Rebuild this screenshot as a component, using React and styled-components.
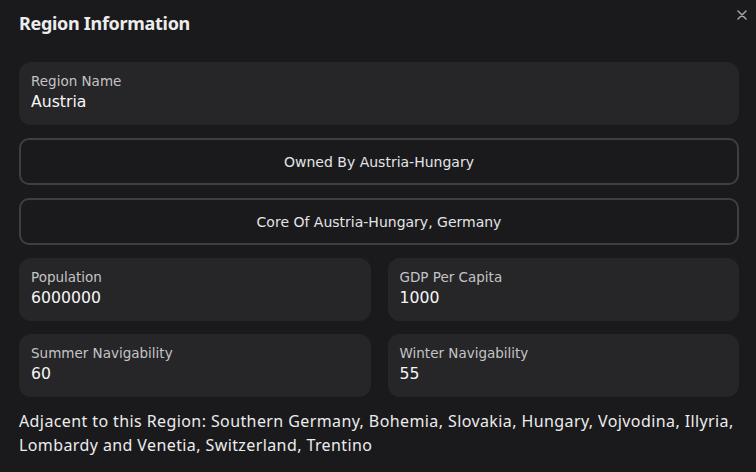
import React from "react"
import styled, { createGlobalStyle } from "styled-components"

const GlobalStyle = createGlobalStyle`
    html, body {
        margin: 0;
        padding: 0;
        background: #1a1a1c;
    }
    body {
        font-family: "DejaVu Sans", "Noto Sans", sans-serif;
        color: #f2f2f2;
    }
`

const Modal = styled.div`
    position: relative;
    width: 756px;
    height: 472px;
    box-sizing: border-box;
    padding: 10px 17px 0 19px;
    background: #1a1a1c;
    display: flex;
    flex-direction: column;
`

const Title = styled.h2`
    margin: 0;
    font-family: "Noto Sans", sans-serif;
    font-size: 18px;
    font-weight: 700;
    letter-spacing: -0.3px;
    line-height: 26px;
    color: #ececec;
`

const CloseButton = styled.button`
    position: absolute;
    top: 7px;
    right: 6px;
    width: 16px;
    height: 16px;
    padding: 0;
    border: none;
    background: none;
    display: flex;
    align-items: center;
    justify-content: center;
    cursor: pointer;
`

const Body = styled.div`
    margin-top: 26px;
    display: flex;
    flex-direction: column;
    gap: 13px;
`

const Field = styled.div`
    background: #262628;
    border-radius: 12px;
    height: 63px;
    box-sizing: border-box;
    padding: 10px 12px 0;
    display: flex;
    flex-direction: column;
`

const Label = styled.span`
    font-size: 13.5px;
    line-height: 18px;
    color: #c4c4c6;
`

const Value = styled.span`
    font-size: 15.7px;
    font-weight: 500;
    line-height: 24px;
    color: #f5f5f5;
`

const OutlineButton = styled.button`
    height: 47px;
    border: 2px solid #3e3e43;
    border-radius: 10px;
    background: transparent;
    color: #e4e4e6;
    font-family: inherit;
    font-size: 14px;
    cursor: pointer;
`

const Grid = styled.div`
    display: grid;
    grid-template-columns: 1fr 1fr;
    column-gap: 17px;
    row-gap: 13px;
`

const Adjacent = styled.p`
    margin: 12px 0 0;
    font-family: "Noto Sans", sans-serif;
    font-size: 16px;
    letter-spacing: 0.4px;
    line-height: 24px;
    color: #ececec;
`

const stats = [
    ["Population", "6000000"],
    ["GDP Per Capita", "1000"],
    ["Summer Navigability", "60"],
    ["Winter Navigability", "55"],
]

export default function App() {
    return (
        <Modal>
            <GlobalStyle />
            <Title>Region Information</Title>
            <CloseButton aria-label="Close">
                <svg width="10" height="10" viewBox="0 0 10 10">
                    <path d="M1 1L9 9M9 1L1 9" stroke="#a6a6aa" strokeWidth="1.5" strokeLinecap="round" />
                </svg>
            </CloseButton>
            <Body>
                <Field>
                    <Label>Region Name</Label>
                    <Value>Austria</Value>
                </Field>
                <OutlineButton>Owned By Austria-Hungary</OutlineButton>
                <OutlineButton>Core Of Austria-Hungary, Germany</OutlineButton>
                <Grid>
                    {stats.map(([label, value]) => (
                        <Field key={label}>
                            <Label>{label}</Label>
                            <Value>{value}</Value>
                        </Field>
                    ))}
                </Grid>
            </Body>
            <Adjacent>
                Adjacent to this Region: Southern Germany, Bohemia, Slovakia, Hungary, Vojvodina, Illyria,
                Lombardy and Venetia, Switzerland, Trentino
            </Adjacent>
        </Modal>
    )
}
